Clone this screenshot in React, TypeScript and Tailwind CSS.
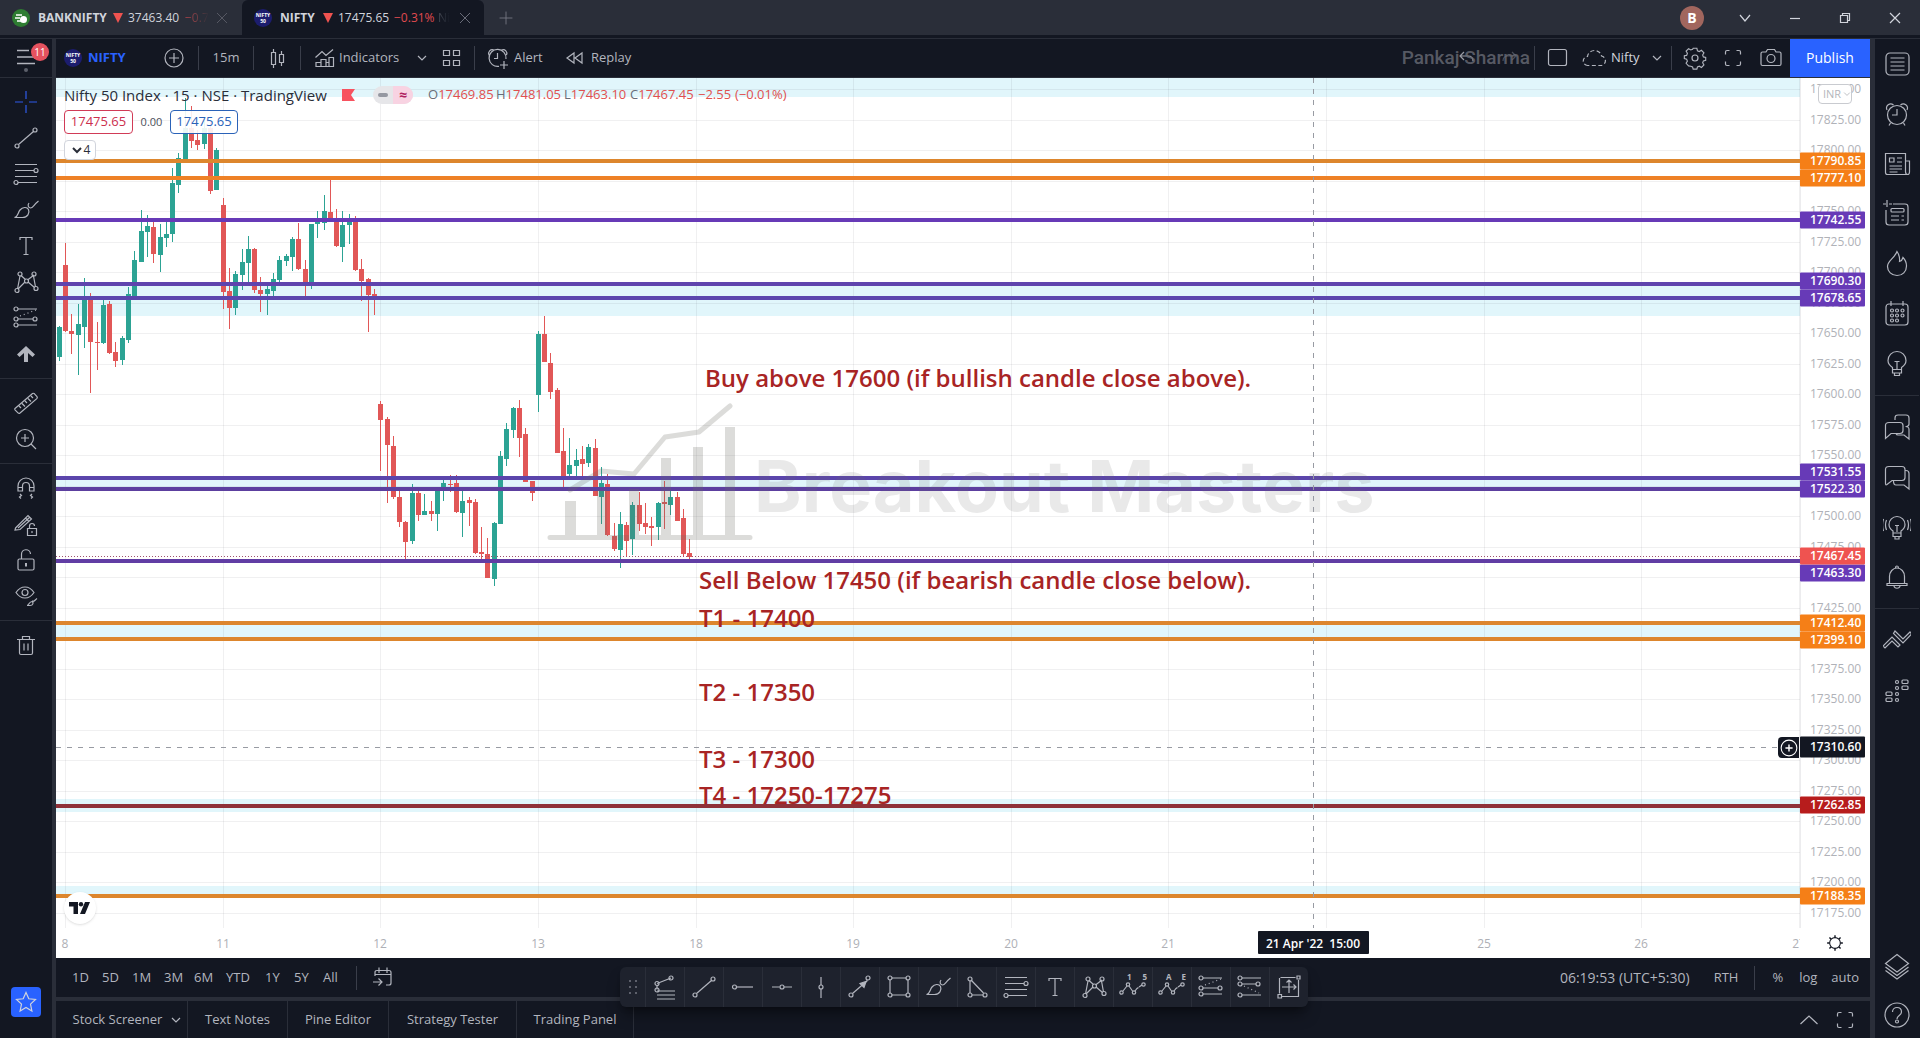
import type { ReactNode } from 'react'
import { clsx } from 'clsx'

// [high, bodyTop, bodyBottom, low, up] in chart pixels, 25 bars per session
type Candle = [number, number, number, number, 0 | 1]

const CANDLES: Candle[] = [
  // carry-over bar
  [248, 249, 279, 283, 1],
  // 8 Apr
  [165, 187, 253, 254, 0], [236, 253, 256, 276, 0], [226, 246, 257, 297, 1], [200, 221, 249, 270, 1], [215, 220, 264, 315, 0],
  [244, 264, 265, 292, 0], [222, 227, 265, 266, 1], [223, 226, 275, 276, 0], [264, 274, 283, 289, 0], [258, 260, 282, 287, 1],
  [209, 216, 262, 265, 1], [173, 182, 218, 219, 1], [132, 153, 184, 184, 1], [137, 148, 154, 179, 1], [144, 149, 176, 185, 0],
  [146, 159, 177, 194, 1], [144, 156, 160, 169, 1], [90, 105, 156, 164, 1], [75, 80, 107, 115, 1], [20, 50, 81, 81, 1],
  [28, 50, 63, 70, 0], [52, 62, 67, 72, 0], [40, 50, 66, 71, 1], [45, 50, 113, 116, 0], [70, 72, 112, 112, 1],
  // 11 Apr
  [120, 127, 214, 231, 0], [190, 213, 230, 251, 0], [193, 196, 230, 237, 1], [171, 184, 197, 212, 1], [158, 171, 185, 206, 1],
  [170, 171, 212, 215, 0], [199, 212, 216, 234, 0], [207, 211, 216, 237, 1], [195, 201, 213, 218, 1], [178, 182, 202, 205, 1],
  [176, 178, 183, 188, 1], [159, 161, 179, 193, 1], [145, 161, 191, 192, 0], [182, 191, 207, 218, 0], [146, 146, 206, 211, 1],
  [133, 143, 146, 160, 1], [117, 133, 145, 152, 1], [102, 134, 141, 143, 0], [131, 141, 168, 169, 0], [133, 147, 169, 184, 1],
  [136, 143, 147, 166, 1], [138, 142, 192, 193, 0], [181, 191, 203, 223, 0], [200, 201, 217, 254, 0], [211, 216, 218, 237, 0],
  // 12 Apr
  [323, 326, 342, 393, 0], [339, 341, 367, 425, 0], [358, 368, 419, 421, 0], [412, 419, 444, 449, 0], [443, 444, 464, 481, 0],
  [406, 415, 463, 466, 1], [412, 415, 437, 443, 0], [416, 433, 437, 437, 1], [423, 433, 436, 443, 0], [412, 412, 436, 453, 1],
  [402, 405, 410, 423, 1], [397, 406, 407, 414, 0], [397, 405, 434, 435, 0], [412, 423, 435, 459, 1], [419, 422, 425, 448, 0],
  [421, 424, 475, 476, 0], [449, 474, 476, 482, 0], [460, 476, 500, 500, 0], [444, 445, 501, 508, 1], [373, 378, 446, 446, 1],
  [345, 351, 381, 388, 1], [329, 330, 352, 360, 1], [322, 330, 360, 379, 0], [350, 356, 404, 404, 0], [403, 403, 415, 423, 0],
  // 13 Apr
  [253, 256, 317, 334, 1], [238, 256, 284, 284, 0], [275, 285, 314, 321, 0], [310, 312, 375, 375, 0], [350, 373, 398, 410, 0],
  [360, 387, 396, 398, 1], [371, 382, 388, 398, 1], [368, 381, 386, 398, 0], [366, 369, 385, 389, 1], [361, 370, 418, 418, 0],
  [389, 405, 419, 446, 1], [396, 406, 457, 458, 0], [445, 458, 471, 473, 0], [434, 446, 472, 490, 1], [444, 447, 463, 479, 0],
  [424, 427, 461, 477, 1], [414, 427, 446, 453, 0], [425, 445, 449, 456, 0], [439, 448, 450, 468, 0], [424, 425, 449, 462, 1],
  [403, 424, 426, 451, 0], [411, 419, 427, 437, 1], [414, 419, 443, 443, 0], [431, 440, 476, 478, 0], [461, 475, 479, 481, 0],
]

const BAR = 6.305
const priceY = (p: number) => Math.round(41.7 + (17825 - p) * 1.22)

const GRID_PRICES = Array.from({ length: 28 }, (_, i) => 17850 - i * 25)
const DAYS = ['8', '11', '12', '13', '18', '19', '20', '21', '', '25', '26', '27']
const dayX = (i: number) => Math.round(9 + i * BAR * 25)

const LEVELS = [
  { price: 17790.85, color: '#dd862d', tag: '#f57f17', tagY: 83 },
  { price: 17777.1, color: '#ee8126', tag: '#f57f17', tagY: 100 },
  { price: 17742.55, color: '#673ab7', tag: '#673ab7', tagY: 142 },
  { price: 17690.3, color: '#5f44ae', tag: '#673ab7', tagY: 203 },
  { price: 17678.65, color: '#5b46ad', tag: '#673ab7', tagY: 220 },
  { price: 17531.55, color: '#5b45ab', tag: '#673ab7', tagY: 394 },
  { price: 17522.3, color: '#5c3f9f', tag: '#673ab7', tagY: 411 },
  { price: 17463.3, color: '#613da4', tag: '#673ab7', tagY: 495 },
  { price: 17412.4, color: '#dd862d', tag: '#f57f17', tagY: 545 },
  { price: 17399.1, color: '#dd862d', tag: '#f57f17', tagY: 562 },
  { price: 17262.85, color: '#8f3138', tag: '#b71c1c', tagY: 727 },
  { price: 17188.35, color: '#dd862d', tag: '#f57f17', tagY: 818 },
]

const ZONES = [
  [0, 19],
  [206, 238],
  [400, 411],
  [545, 561],
  [721, 734],
  [808, 818],
]

const NOTES = [
  { x: 649, y: 309, text: 'Buy above 17600 (if bullish candle close above).' },
  { x: 643, y: 511, text: 'Sell Below 17450 (if bearish candle close below).' },
  { x: 643, y: 549, text: 'T1 - 17400' },
  { x: 643, y: 623, text: 'T2 - 17350' },
  { x: 643, y: 690, text: 'T3 - 17300' },
  { x: 643, y: 726, text: 'T4 - 17250-17275' },
]

function Icon({ children, size = 'size-7', className }: { children: ReactNode; size?: string; className?: string }) {
  return (
    <svg
      viewBox="0 0 28 28"
      className={clsx('shrink-0', size, className)}
      fill="none"
      stroke="currentColor"
      strokeWidth="1.2"
      aria-hidden="true"
    >
      {children}
    </svg>
  )
}

const Chevron = ({ size, className }: { size?: string; className?: string }) => (
  <Icon size={size} className={className}><path d="M10 12l4 4 4-4" /></Icon>
)

const ICONS = {
  cross: <path stroke="#2f5bea" d="M14 3v8M14 17v8M3 14h8M17 14h8" />,
  trend: <><path d="M6.500 20.500L21.500 7.500" /><circle cx="5" cy="22" r="2" /><circle cx="23" cy="6" r="2" /></>,
  fib: <><path d="M3 4.500h22M3 10.500h19M3 16.500h22M6 22.500h19" /><circle cx="24" cy="10.500" r="2" /><circle cx="4" cy="22.500" r="2" /></>,
  brush: <path d="M2.500 21.500c4-1 3-4.500 5.500-7.500 2.500-3 7-3.500 8.500-.5 1.500 3.500-1 8-6 8zM17 7c-1.500 2-1 4.500 1.500 5 2.500 0 3-3 8-7" />,
  text: <path d="M8 8V5.500h12V8M14 5.500v17M11.500 22.500h5" />,
  pattern: <><path d="M5.500 21L8 8M9 7.500l4.500 4M22 7l-6.500 5M21.500 8l2 11M6 21l7-7M22.500 19.500L16 14" /><circle cx="8" cy="6" r="2" /><circle cx="22" cy="6" r="2" /><circle cx="14.500" cy="13" r="2" /><circle cx="5" cy="22.500" r="2" /><circle cx="24" cy="20.500" r="2" /></>,
  forecast: <><path d="M6 5h19M6 15h15M6 21h19" /><path strokeDasharray="1 3" d="M8 12L24 6" /><circle cx="4" cy="5" r="2" /><circle cx="4" cy="15" r="2" /><circle cx="23" cy="15" r="2" /><circle cx="4" cy="21" r="2" /></>,
  arrowUp: <path fill="currentColor" stroke="none" d="M14 6l9 8.500-2.500 2.500-4.500-4v9h-4v-9l-4.500 4L5 14.500z" />,
  ruler: <path d="M3 19.500L20.500 4.500q1-.6 2 .3l2.500 2.800q.8 1-.2 2L8 24q-1 .8-2-.2l-3-3q-.6-.7 0-1.300zM7 17l2 2M10 14.500l3 3M13 12l2 2M16 9.500l3 3M19 7l2 2" />,
  zoom: <><circle cx="13" cy="13" r="8.500" /><path d="M19 19l5 5M13 9v8M9 13h8" /></>,
  magnet: <><path d="M6 17v-5a8 8 0 0116 0v5h-4.500v-5a3.500 3.500 0 00-7 0v5zM6 13.500h4.500M17.500 13.500H22" /><path d="M8 20l1.500 1.500L7.500 23 9 24.500M20 20l-1.500 1.500 2 1.500-1.500 1.500" /></>,
  pencilLock: <><path d="M3.500 18L16 5.500l3.500 3.500L8 19.500 3 20zM6 18L17.500 7.500M13.500 8l3.500 3.500" /><path d="M15.500 18.500h9v7h-9zM17.500 18.500v-2.500a2.500 2.500 0 015 0M20 21v2" /></>,
  lock: <><rect x="6" y="13" width="16" height="11" rx="1.500" /><path d="M9.500 13V8.500a4.500 4.500 0 019-.5" /><path strokeWidth="2" d="M14 17v3.500" /></>,
  eye: <><path d="M4 10.500C7 6 10 5 13 5s6 1 9 5.500c-3 4.500-6 5.500-9 5.500s-6-1-9-5.500z" /><circle cx="13" cy="10.500" r="3" /><path d="M15 23.500c2 0 2-4 5-4 2 1 1 4-2 4zM20.500 18.500c1 2 2 0 4.500-2" /></>,
  trash: <path d="M5 8.500h18M7.500 8.500v13.500q0 1.500 1.500 1.500h10q1.500 0 1.500-1.500V8.500M10.500 8V5.500h7V8M12 12.500v7M16 12.500v7" />,
  plus: <><circle cx="14" cy="14" r="9" /><path d="M14 9v10M9 14h10" /></>,
  candles: <path d="M8.500 8.500h4v12h-4zM10.500 5v3.500M10.500 20.500V24M16.500 10.500h4v8h-4zM18.500 7v3.500M18.500 18.500V22" />,
  indicators: <path d="M4.500 13.500L11 7.500l4 4L22 5.500M5 22.500v-4h5v4zM10 22.500v-7h5v7M15 22.500v-4h3M18 22.500v-9h4.500v9zM5 22.500h17.500" />,
  grid: <path d="M6.500 6.500h6v5h-6zM16.500 6.500h6v5h-6zM6.500 16.500h6v5h-6zM16.500 16.500h6v5h-6z" />,
  alert: <path d="M15 22.300A8.500 8.500 0 1122 15M13.500 9v5.500H10M5 11c-1.500-3 1.500-6.500 5-5M17.500 6c3.500-1.500 6.500 2 5 5M20 17v8M16 21h8" />,
  replay: <path d="M13 9v10l-7-5zM21 9v10l-7-5z" />,
  square: <rect x="4.500" y="5.500" width="18" height="16" rx="2" />,
  cloud: <path strokeDasharray="4 2.500" d="M7 21.500a4.500 4.500 0 01-.5-9c.5-4 4-6 7-6s6.500 2 7 5.500a4.800 4.800 0 01-.5 9.500z" />,
  gear: <><path d="M12 4.500h4l.6 2.600 2 .9 2.300-1.400 2.700 2.700-1.400 2.300.8 2 2.500.6v3l-2.500.6-.8 2 1.400 2.300-2.700 2.600-2.300-1.300-2 .8-.6 2.300h-4l-.6-2.300-2-.8L7.100 23l-2.700-2.700L5.800 18 5 16l-2.500-.6v-3L5 12l.8-2.200-1.400-2.300L7.100 5l2.300 1.300 2-.8z" transform="translate(1 0) scale(.93 .95)" /><circle cx="14" cy="14" r="3" /></>,
  full: <path d="M6.500 10.500V8q0-1.500 1.500-1.500h2.500M17.500 6.500H20q1.500 0 1.500 1.500v2.500M21.500 17.500V20q0 1.500-1.500 1.500h-2.500M10.500 21.500H8q-1.500 0-1.500-1.500v-2.500" />,
  camera: <><path d="M4 9.500q0-1.500 1.500-1.500H9l1.500-2.500h7L19 8h3.500Q24 8 24 9.500V20q0 1.500-1.500 1.500h-17Q4 21.500 4 20z" /><circle cx="14" cy="14.500" r="4" /></>,
  undo: <path stroke="#d1d4dc" d="M10 8l-4 4 4 4M6 12h8q5 0 5 5" />,
  list: <><rect x="3" y="3" width="23" height="22" rx="4" /><path d="M7.500 8h14M7.500 12h14M7.500 16h14M7.500 20h14" /></>,
  alarm: <><circle cx="14" cy="15" r="9.500" /><path d="M14 9v6H9M4 10C2 5.500 7 2 10.500 5M24 10C26 5.500 21 2 17.500 5M7.500 23L6 25.500M20.500 23L22 25.500" /></>,
  news: <path d="M2.500 3.500h20v18q0 3 2 3h-20q-2 0-2-2zM22.500 11h4v11q0 2.500-2 2.500M6.500 8h4.500v4H6.500zM14 8h5M14 12h5M6.500 16h12.500M6.500 19h12.500M6.500 22h8" />,
  notes: <><path d="M3 10v12q0 3 3 3h16q3 0 3-3V7q0-3-3-3H10M4 0v7M0 4h3M6 4h3" /><rect x="8" y="8.500" width="13" height="3.500" rx="1" /><path d="M8 16h8M18.500 16H21M8 20h8M18.500 20H21" /></>,
  fire: <path d="M14 25.500c-5.500 0-9.500-4-9.500-9 0-6 7-8 9.500-15 2 3 3 6 2.500 10 1.500-.5 3-2 3.500-4 2.500 2.500 3.500 5 3.500 8.500 0 5.500-4 9.500-9.500 9.500z" />,
  calendar: <><rect x="3" y="4" width="22" height="21" rx="3" /><path d="M8 1v5M20 1v5" /><g><circle cx="9" cy="10.500" r="1.500" /><circle cx="14" cy="10.500" r="1.500" /><circle cx="19.500" cy="10.500" r="1.500" /><circle cx="9" cy="15.500" r="1.500" /><circle cx="14" cy="15.500" r="1.500" /><circle cx="19.500" cy="15.500" r="1.500" /><circle cx="9" cy="20.500" r="1.500" /><circle cx="14" cy="20.500" r="1.500" /></g></>,
  bulb: <path d="M9.500 19.500v-2c-3-2-4.500-4-4.500-7a9 9 0 0118 0c0 3-1.500 5-4.500 7v2zM9.500 19.500v3.500h9v-3.500M11.500 23v2.500h5V23M11.500 11.500h5M14 11.500v7.500" />,
  chats: <path d="M12 7V5q0-3 3-3h8q3 0 3 3v6q0 2-2.500 2.500M6 9.500h11q3 0 3 3v5q0 3-3 3H8l-5.500 5v-13q0-3 3.500-3zM22.500 13.500q3.500 0 3.500 3v9.500l-5-4h-6q-1.500 0-2-1.500" />,
  chat: <path d="M6 3.500h13q3 0 3 3v8q0 3-3 3H9l-5 4q-1.500 1-1.500-1V6.500q0-3 3.500-3zM22 7.500h1q3 0 3 3V26l-5-4H13q-2.500 0-2.500-4" />,
  bulbWaves: <><path d="M10 20v-2c-3-2-4-4-4-6.500a8 8 0 0116 0c0 2.500-1 4.500-4 6.500v2zM10 20v3.500h8V20M12 23.500V26h4v-2.500M12 12.500h4M14 12.500V19" /><path d="M3.500 7q-2 5 0 10M.5 6q-2 6 0 12M24.500 7q2 5 0 10M27.500 6q2 6 0 12" /></>,
  bell: <path d="M6.500 20.500v-7a7.500 8.500 0 0115 0v7M4 20.500h20v2H4zM11 23c.5 3 5.500 3 6 0M12.500 5q0-2 1.500-2t1.500 2" />,
  ideas: <path d="M1 20l9-9 8 8-2 2-6-6-7 7zM13 5l8 8 7-7 1.500 2L21 17l-9.500-9.500z" transform="translate(-1 0)" />,
  dom: <><rect x="3" y="16" width="6" height="3.500" rx="1" /><rect x="3" y="22" width="6" height="3.500" rx="1" /><rect x="19" y="4" width="6" height="3.500" rx="1" /><rect x="19" y="10" width="6" height="3.500" rx="1" /><circle cx="14" cy="6" r="1.500" /><circle cx="14" cy="12" r="1.500" /><circle cx="14" cy="18" r="1.500" /><circle cx="14" cy="24" r="1.500" /></>,
  layers: <path d="M14 1.500l11.500 9L14 19 2.500 10.500zM2.500 14L14 22.500 25.500 14M2.500 17.500L14 26l11.500-8.500" />,
  help: <><circle cx="14" cy="14" r="12" /><path d="M9.500 11c0-6 9-6 9 0 0 3.500-4.500 3.500-4.500 7" /><circle cx="14" cy="20.500" r="1.500" /></>,
  star: <path d="M14 4.500l2.800 6.300 6.700.7-5 4.600 1.400 6.900-5.900-3.500L8.100 23l1.400-6.900-5-4.600 6.700-.7z" />,
  goTo: <path d="M6 12V8.500q0-2 2-2h12q2 0 2 2V19q0 2-2 2h-3M10 3.500V9M18 3.500V9M6 10.500h16M4 18h9M9.500 14.500L13 18l-3.500 3.500" />,
  up: <path d="M5.500 18L14 10l8.500 8" />,
  fibChannel: <><path d="M6 10.500L20 5M6 12.500v4M6 18h18M6 22h18M6 26h18" /><circle cx="6" cy="10.500" r="2" /><circle cx="20" cy="5" r="2" /><circle cx="6" cy="17" r="2" /></>,
  ray: <><path d="M7 14h17" /><circle cx="5.500" cy="14" r="2" /></>,
  hline: <><path d="M4 14h7.500M16 14h8" /><circle cx="14" cy="14" r="2" /></>,
  vline: <><path d="M14 4v8M14 16v9" /><circle cx="14" cy="14" r="2" /></>,
  arrow: <><path d="M6.500 20.500L21.500 7.500" /><path fill="currentColor" d="M20 8.500l-2 6-4-4z" /><circle cx="5" cy="22" r="2" /><circle cx="22" cy="5" r="2" /></>,
  rect: <><path d="M6.500 5h15M6.500 22h15M5 6.500v14M23 6.500v14" /><circle cx="5" cy="5" r="2" /><circle cx="23" cy="5" r="2" /><circle cx="5" cy="22" r="2" /><circle cx="23" cy="22" r="2" /></>,
  triangle: <><path d="M7 7.500V20M8.500 7.500L20.500 20M9 22h11" /><circle cx="7" cy="6" r="2" /><circle cx="7" cy="22" r="2" /><circle cx="22" cy="22" r="2" /></>,
  wave: <><path d="M4 18l4-5M10 13l3.500 5M16 18l2-2.500 1.500-1M20 14l3-2" /><circle cx="2.500" cy="19.500" r="1.700" /><circle cx="9" cy="11.500" r="1.700" /><circle cx="15" cy="19.500" r="1.700" /><circle cx="24.500" cy="11.500" r="1.700" /></>,
  short: <><path d="M6 5h19M6 11h14M6 22h19" /><path strokeDasharray="1 3" d="M8 13L23 20" /><circle cx="4" cy="5" r="2" /><circle cx="4" cy="11" r="2" /><circle cx="22" cy="11" r="2" /><circle cx="4" cy="22" r="2" /></>,
  range: <path d="M5.500 4.500h15M4.500 5v15.500M23.500 7v16.500H7M14 20V7M11.500 9.500L14 7l2.500 2.500M7 14h14M18.500 11.500L21 14l-2.500 2.500M22 3h3v3h-3zM3 21.500h3.500V25H3z" />,
}

type IconName = keyof typeof ICONS

function IconButton({ icon, label, className }: { icon: IconName; label: string; className?: string }) {
  return (
    <button aria-label={label} className={clsx('flex shrink-0 items-center justify-center text-[#b2b5be]', className)}>
      <Icon>{ICONS[icon]}</Icon>
    </button>
  )
}

const Sep = ({ className }: { className?: string }) => <div className={clsx('h-6 w-px shrink-0 bg-[#3a3e4a]', className)} />

function NiftyLogo() {
  return (
    <span className="flex size-[18px] shrink-0 flex-col items-center justify-center rounded-full bg-[#1c1d6e] text-[5px] leading-[6px] font-bold text-white">
      <span>NIFTY</span>
      <span>50</span>
    </span>
  )
}

function TabStrip() {
  return (
    <div className="flex h-[35px] shrink-0 items-stretch bg-[#2a2e39] text-xs text-[#d1d4dc]">
      <div className="flex w-[242px] items-center pl-3">
        <button className="flex w-[200px] items-center overflow-hidden whitespace-nowrap">
          <svg viewBox="0 0 18 18" className="size-[18px] shrink-0" aria-hidden="true">
            <circle cx="9" cy="9" r="9" fill="#2e7d32" />
            <path d="M4 6h6M3 9h5M5 12h4" stroke="#fff" strokeWidth="1.500" />
            <circle cx="11.500" cy="10.500" r="3.500" fill="#fff" />
          </svg>
          <b className="ml-2 w-[73px] text-left">BANKNIFTY</b>
          <Triangle />
          <span className="w-[57px] text-left">37463.40</span>
          <span className="bg-linear-to-r from-[#b8434a] to-[#2a2e39] bg-clip-text text-transparent">−0.7</span>
        </button>
        <button aria-label="Close BANKNIFTY" className="text-[#5d606b]">
          <Icon size="size-5"><path d="M7 7l14 14M21 7L7 21" /></Icon>
        </button>
      </div>
      <div className="flex w-[242px] items-center rounded-t-md bg-[#131722] pl-3">
        <button className="flex w-[201px] items-center overflow-hidden whitespace-nowrap">
          <NiftyLogo />
          <b className="ml-2 w-[41px] text-left">NIFTY</b>
          <Triangle />
          <span className="w-[56px] text-left">17475.65</span>
          <span className="w-[44px] text-left text-[#e04a4f]">−0.31%</span>
          <span className="bg-linear-to-r from-[#4a4e59] to-[#131722] bg-clip-text text-transparent">Ni</span>
        </button>
        <button aria-label="Close NIFTY" className="text-[#787b86]">
          <Icon size="size-5"><path d="M7 7l14 14M21 7L7 21" /></Icon>
        </button>
      </div>
      <button aria-label="New tab" className="ml-1 flex w-9 items-center justify-center text-[#787b86]">
        <Icon size="size-5"><path d="M14 5v18M5 14h18" /></Icon>
      </button>
      <div className="ml-auto flex items-center">
        <button className="mr-4 flex size-6 items-center justify-center rounded-full bg-[#a1665e] text-sm font-bold text-white">B</button>
        <button aria-label="More" className="flex w-[50px] justify-center"><Icon><path d="M9 11l5 6 5-6" /></Icon></button>
        <button aria-label="Minimize" className="flex w-[50px] justify-center"><Icon><path d="M9 14.500h10" /></Icon></button>
        <button aria-label="Restore" className="flex w-[50px] justify-center"><Icon><path d="M9.500 11.500h7v7h-7zM11.500 11.500v-2h7v7h-2" /></Icon></button>
        <button aria-label="Close window" className="flex w-[50px] justify-center"><Icon><path d="M9 9l10 10M19 9L9 19" /></Icon></button>
      </div>
    </div>
  )
}

const Triangle = () => (
  <svg viewBox="0 0 10 10" className="mr-[5px] ml-[2px] size-[10px] shrink-0" aria-hidden="true">
    <path d="M0 0h10L5 10z" fill="#ef5350" />
  </svg>
)

const TOOL_GROUPS: [IconName, string][][] = [
  [
    ['cross', 'Cross'], ['trend', 'Trend line'], ['fib', 'Fib retracement'], ['brush', 'Brush'],
    ['text', 'Text'], ['pattern', 'Patterns'], ['forecast', 'Long position'], ['arrowUp', 'Arrow mark up'],
  ],
  [['ruler', 'Measure'], ['zoom', 'Zoom in']],
  [['magnet', 'Magnet mode'], ['pencilLock', 'Stay in drawing mode'], ['lock', 'Lock drawings'], ['eye', 'Hide drawings']],
  [['trash', 'Remove drawings']],
]

function DrawingBar() {
  return (
    <nav className="flex w-14 shrink-0 flex-col border-r-4 border-[#2a2e39]">
      <button aria-label="Menu" className="relative flex h-[39px] items-center justify-center border-b border-[#2a2e39] text-[#b2b5be]">
        <Icon><path strokeWidth="1.500" d="M5 6.500h12M5 13h18M5 19.500h18" /></Icon>
        <span className="absolute top-1 left-[31px] flex size-[18px] items-center justify-center rounded-full bg-[#e5525f] text-[10px] text-white">11</span>
        <span className="absolute bottom-[5px] size-1 rounded-full bg-[#5d606b]" />
      </button>
      {TOOL_GROUPS.map((group, i) => (
        <div key={i} className={clsx('flex flex-col py-[6px]', i < TOOL_GROUPS.length - 1 && 'border-b border-[#2a2e39]')}>
          {group.map(([icon, label]) => (
            <IconButton key={label} icon={icon} label={label} className="h-9" />
          ))}
        </div>
      ))}
      <button aria-label="Show favorite tools" className="mt-auto mb-[21px] ml-[11px] flex size-[30px] items-center justify-center rounded-sm bg-[#2962ff] text-[#d1d4dc]">
        <Icon>{ICONS.star}</Icon>
      </button>
    </nav>
  )
}

function Header() {
  return (
    <header className="flex h-[39px] shrink-0 items-center border-b border-[#2a2e39] text-[13px] whitespace-nowrap text-[#b2b5be]">
      <button className="flex w-[98px] items-center gap-[6px] pl-2 font-bold text-[#2962ff]">
        <NiftyLogo />
        NIFTY
      </button>
      <IconButton icon="plus" label="Compare" className="w-10" />
      <Sep className="ml-1" />
      <button className="w-[54px]">15m</button>
      <Sep />
      <IconButton icon="candles" label="Candles" className="w-[46px]" />
      <Sep />
      <button className="flex w-[105px] items-center pl-[10px]"><Icon>{ICONS.indicators}</Icon>Indicators</button>
      <button aria-label="Favorite indicators" className="flex w-8 justify-center"><Chevron /></button>
      <button aria-label="Templates" className="flex w-[25px] justify-center"><Icon>{ICONS.grid}</Icon></button>
      <Sep className="ml-[11px]" />
      <button className="flex w-[76px] items-center gap-[2px] pl-[9px]"><Icon>{ICONS.alert}</Icon>Alert</button>
      <button className="flex items-center gap-[2px] pl-[10px]"><Icon>{ICONS.replay}</Icon>Replay</button>

      <div className="relative ml-auto flex items-center pr-1">
        <IconButton icon="undo" label="Undo" className="w-9 opacity-70" />
        <button aria-label="Redo" className="flex w-11 justify-center text-[#4a4e59]"><Icon><path d="M18 8l4 4-4 4M22 12h-8q-5 0-5 5" /></Icon></button>
        <span className="absolute right-1 font-['Roboto',sans-serif] text-[19px] font-medium text-[#696c76]/80">Pankaj Sharma</span>
      </div>
      <Sep />
      <IconButton icon="square" label="Layout" className="w-[46px]" />
      <button className="flex w-[62px] items-center gap-[2px] text-[#d1d4dc]"><Icon className="text-[#b2b5be]">{ICONS.cloud}</Icon>Nifty</button>
      <button aria-label="Manage layouts" className="flex w-7 justify-center"><Chevron /></button>
      <Sep className="mr-1" />
      <IconButton icon="gear" label="Settings" className="w-[38px]" />
      <IconButton icon="full" label="Fullscreen" className="w-[38px]" />
      <IconButton icon="camera" label="Snapshot" className="w-[38px]" />
      <button className="h-full w-20 bg-[#2962ff] text-sm text-white">Publish</button>
    </header>
  )
}

function Plot() {
  return (
    <svg className="block h-full w-full" role="img" aria-label="Nifty 50 Index, 15 minute candles">
      {ZONES.map(([top, bottom]) => (
        <rect key={top} x="0" y={top} width="100%" height={bottom - top} fill="#e1f6fb" />
      ))}
      <g fill="#2a2e39" fillOpacity="0.07">
        {GRID_PRICES.map(p => <rect key={p} x="0" y={priceY(p)} width="100%" height="1" />)}
        {DAYS.map((d, i) => d && <rect key={d} x={dayX(i)} y="0" width="1" height="100%" />)}
        <rect x="1270" y="0" width="1" height="100%" />
      </g>

      {CANDLES.map(([high, top, bottom, low, up], i) => {
        const x = Math.round(9 + (i - 1) * BAR)
        return (
          <g key={i} fill={up ? '#2ca394' : '#e15757'}>
            <rect x={x} y={high} width="1" height={low - high} />
            <rect x={x - 2} y={top} width="5" height={bottom - top} />
          </g>
        )
      })}

      <line x1="0" x2="100%" y1="478.500" y2="478.500" stroke="#a0526f" strokeDasharray="1 2" />
      {LEVELS.map(l => (
        <rect key={l.price} x="0" y={priceY(l.price) - 2} width="100%" height="4" fill={l.color} />
      ))}

      {/* channel watermark */}
      <g fill="#6b6b63" stroke="#6b6b63" opacity="0.23">
        <path
          fill="none"
          strokeWidth="5"
          strokeLinecap="round"
          strokeLinejoin="round"
          d="M494 459.500H694M514 412L545 393 578 396 609 359 643 354 674 328"
        />
        <path stroke="none" d="M509 423h11v34h-11zM541 412h10v45h-10zM573 411h10v46h-10zM605 380h10v77h-10zM637 369h10v88h-10zM669 349h10v108h-10z" />
      </g>
      <text x="698" y="434" fill="#6b6b6b" fillOpacity="0.15" className="font-['Inter',sans-serif] text-[72px] font-bold">
        Breakout Masters
      </text>

      <g fill="#a82424" className="text-2xl font-semibold">
        {NOTES.map(n => <text key={n.text} x={n.x} y={n.y}>{n.text}</text>)}
      </g>

      {/* crosshair */}
      <g stroke="#989ba3" strokeDasharray="5 6">
        <line x1="0" x2="100%" y1="669.500" y2="669.500" />
        <line x1="1257.500" x2="1257.500" y1="0" y2="100%" />
      </g>
    </svg>
  )
}

function PriceTag({ y, height, price, fill }: { y: number; height: number; price: number; fill: string }) {
  return (
    <g>
      <rect x="-1" y={y - height / 2} width="65" height={height} rx="1" fill={fill} />
      <text x="9" y={y + 4} fill="#fff" className="font-semibold">{price.toFixed(2)}</text>
    </g>
  )
}

function PriceAxis() {
  return (
    <div className="relative w-[70px] shrink-0 border-l border-[#ececee]">
      <svg className="block h-full w-full overflow-visible text-xs">
        <g fill="#b0b2b8">
          {GRID_PRICES.map(p => <text key={p} x="9" y={priceY(p) + 4}>{p.toFixed(2)}</text>)}
        </g>
        {LEVELS.map(l => (
          <PriceTag key={l.price} y={l.tagY} height={17} price={l.price} fill={l.tag} />
        ))}
        <PriceTag y={478} height={17} price={17467.45} fill="#ef5350" />
        <PriceTag y={669} height={21} price={17310.6} fill="#131722" />
      </svg>
      <button className="absolute top-[6px] left-[17px] flex h-5 w-[34px] items-center rounded-sm border border-[#c9cbd0] bg-white pl-1 text-[11px] text-[#b4b6bb]">
        INR
        <Chevron size="size-5" className="-ml-1" />
      </button>
      <button aria-label="Add alert at 17310.60" className="absolute top-[659px] -left-[23px] flex size-[21px] items-center justify-center rounded-l-sm bg-[#131722] text-white">
        <Icon size="size-5"><circle cx="14" cy="14" r="11" strokeWidth="1.500" /><path strokeWidth="2" d="M14 9v10M9 14h10" /></Icon>
      </button>
    </div>
  )
}

const OHLC = [
  ['O', '17469.85', 'w-[68px]'],
  ['H', '17481.05', 'w-[68px]'],
  ['L', '17463.10', 'w-[66px]'],
  ['C', '17467.45', 'w-[68px]'],
]

function Legend() {
  return (
    <div className="absolute top-[7px] left-2 whitespace-nowrap">
      <div className="flex h-5 items-center">
        <span className="w-[278px] text-[15px] text-[#2a2e39]">Nifty 50 Index · 15 · NSE · TradingView</span>
        <svg viewBox="0 0 13 12" className="h-3 w-[13px]" aria-hidden="true"><path fill="#f7525f" d="M0 0h13L9 6l4 6H0z" /></svg>
        <span className="ml-[18px] flex h-[18px] w-10 overflow-hidden rounded-full bg-[#e6e6e9]">
          <span className="flex w-5 items-center justify-center"><i className="h-1 w-[10px] rounded-full bg-[#9598a1]" /></span>
          <span className="flex w-5 items-center justify-center bg-[#f8d3e2] text-sm font-bold text-[#b0225f]">≈</span>
        </span>
        <span className="ml-[15px] flex text-[13px] text-[#e0504f]">
          {OHLC.map(([k, v, w]) => (
            <span key={k} className={w}><span className="text-[#6a6d78]">{k}</span>{v}</span>
          ))}
          <span className="w-[37px]">−2.55</span>
          <span>(−0.01%)</span>
        </span>
      </div>
      <div className="mt-[5px] flex h-6 items-center">
        <button className="h-6 w-[69px] rounded border border-[#d13b57] bg-white/90 text-[13px] text-[#cc2f4d]">17475.65</button>
        <span className="w-[37px] text-center text-[11px] text-[#4a4e59]">0.00</span>
        <button className="h-6 w-[68px] rounded border border-[#2a62b8] bg-white/90 text-[13px] text-[#2a62b8]">17475.65</button>
      </div>
      <button className="mt-[6px] flex h-5 w-8 items-center justify-center rounded-sm border border-[#d1d4dc] bg-white text-xs text-[#2a2e39]">
        <Chevron className="-mx-[7px] stroke-2" />4
      </button>
    </div>
  )
}

function TimeAxis() {
  return (
    <div className="flex h-[30px] shrink-0">
      <svg className="block h-full flex-1 overflow-hidden text-xs">
        <g fill="#aeb0b6" textAnchor="middle">
          {DAYS.map((d, i) => d && <text key={d} x={dayX(i)} y="20">{d}</text>)}
        </g>
        <rect x="1202" y="3" width="111" height="23" rx="1" fill="#131722" />
        <text x="1257" y="20" fill="#fff" textAnchor="middle" className="font-semibold whitespace-pre">{"21 Apr '22  15:00"}</text>
      </svg>
      <button aria-label="Axis settings" className="flex w-[70px] items-center justify-center text-[#131722]">
        <Icon size="size-5">
          <circle cx="14" cy="14" r="7.500" strokeWidth="1.500" />
          <path strokeWidth="2" d="M14 3v3.500M14 21.500V25M3 14h3.500M21.500 14H25M6.200 6.200l2.500 2.500M19.300 19.300l2.500 2.500M6.200 21.800l2.500-2.500M19.300 8.700l2.500-2.500" />
        </Icon>
      </button>
    </div>
  )
}

const RANGES = [
  ['1D', 'w-[30px]'], ['5D', 'w-[30px]'], ['1M', 'w-8'], ['3M', 'w-[30px]'], ['6M', 'w-8'],
  ['YTD', 'w-[39px]'], ['1Y', 'w-[29px]'], ['5Y', 'w-[29px]'], ['All', 'w-[33px]'],
]

function RangeBar() {
  return (
    <div className="flex h-[39px] shrink-0 items-center pl-4 text-[13px] whitespace-nowrap text-[#b2b5be]">
      {RANGES.map(([r, w]) => <button key={r} className={clsx('text-left', w)}>{r}</button>)}
      <Sep />
      <IconButton icon="goTo" label="Go to" className="ml-3" />
      <div className="ml-auto flex items-center pr-[11px]">
        <button className="text-sm">06:19:53 (UTC+5:30)</button>
        <button className="ml-6">RTH</button>
        <Sep className="ml-4" />
        <button className="ml-[17px]">%</button>
        <button className="ml-4">log</button>
        <button className="ml-[14px]">auto</button>
      </div>
    </div>
  )
}

const PANELS = [
  ['Stock Screener', 'w-[132px]'],
  ['Text Notes', 'w-[100px]'],
  ['Pine Editor', 'w-[101px]'],
  ['Strategy Tester', 'w-[128px]'],
  ['Trading Panel', 'w-[117px]'],
]

function PanelTabs() {
  return (
    <div className="flex h-[37px] shrink-0 items-center text-[13px] whitespace-nowrap text-[#b2b5be]">
      {PANELS.map(([name, w], i) => (
        <button key={name} className={clsx('flex h-full items-center justify-center border-r border-[#2a2e39]', w)}>
          {name}
          {i === 0 && <Chevron className="-mr-5" />}
        </button>
      ))}
      <div className="ml-auto flex pr-[7px]">
        <IconButton icon="up" label="Open panel" className="w-9" />
        <IconButton icon="full" label="Maximize panel" className="w-9" />
      </div>
    </div>
  )
}

const FAVORITES: [IconName, string][] = [
  ['fibChannel', 'Trend-based fib'], ['trend', 'Trend line'], ['ray', 'Horizontal ray'], ['hline', 'Horizontal line'],
  ['vline', 'Vertical line'], ['arrow', 'Arrow'], ['rect', 'Rectangle'], ['brush', 'Brush'], ['triangle', 'Triangle'],
  ['fib', 'Fib retracement'], ['text', 'Text'], ['pattern', 'XABCD pattern'], ['wave', '1 5'], ['wave', 'A E'],
  ['forecast', 'Long position'], ['short', 'Short position'], ['range', 'Date and price range'],
]

function FavoritesBar() {
  return (
    <div className="absolute bottom-[31px] left-[564px] flex h-10 rounded-md bg-[#1e222d] shadow-lg shadow-black/40">
      <div className="grid w-[25px] grid-cols-[2px_2px] content-center justify-center gap-1">
        {Array.from({ length: 6 }, (_, i) => <i key={i} className="size-[2px] bg-[#5d606b]" />)}
      </div>
      {FAVORITES.map(([icon, label]) => (
        <button key={label} aria-label={label} className="relative flex w-[39px] items-center justify-center border-l border-[#2a2e39] text-[#b2b5be]">
          <Icon>{ICONS[icon]}</Icon>
          {icon === 'wave' && (
            <span className="absolute top-1 left-[13px] flex w-[20px] justify-between text-[8px] leading-3 font-bold">
              {label.split(' ').map(c => <span key={c}>{c}</span>)}
            </span>
          )}
        </button>
      ))}
    </div>
  )
}

const SIDE_GROUPS: [IconName, string][][] = [
  [
    ['list', 'Watchlist'], ['alarm', 'Alerts'], ['news', 'News'], ['notes', 'Data window'],
    ['fire', 'Hotlists'], ['calendar', 'Calendar'], ['bulb', 'My ideas'],
  ],
  [['chats', 'Public chats'], ['chat', 'Private chats'], ['bulbWaves', 'Ideas stream'], ['bell', 'Notifications']],
  [['ideas', 'Order panel'], ['dom', 'DOM']],
]

function SideBar() {
  return (
    <aside className="flex w-[50px] shrink-0 flex-col border-l-[5px] border-[#2a2e39] pr-px">
      {SIDE_GROUPS.map((group, i) => (
        <div key={i} className={clsx('flex flex-col', i > 0 && 'pt-[6px]', i < 2 && 'border-b border-[#2a2e39] pb-[6px]')}>
          {group.map(([icon, label]) => <IconButton key={label} icon={icon} label={label} className="h-[50px]" />)}
        </div>
      ))}
      <div className="mt-auto flex flex-col">
        <IconButton icon="layers" label="Object tree" className="h-[50px]" />
        <IconButton icon="help" label="Help" className="h-[46px]" />
      </div>
    </aside>
  )
}

export default function App() {
  return (
    <div className="flex h-screen flex-col overflow-hidden bg-[#131722] font-['Open_Sans',sans-serif]">
      <TabStrip />
      <div className="mt-[3px] flex min-h-0 flex-1 border-t border-[#2a2e39]">
        <DrawingBar />
        <div className="relative flex min-w-0 flex-1 flex-col">
          <Header />
          <main className="flex min-h-0 flex-1 flex-col bg-white">
            <div className="flex min-h-0 flex-1">
              <div className="relative min-w-0 flex-1">
                <Plot />
                <Legend />
                <div className="absolute bottom-1 left-2 flex size-8 items-center justify-center rounded-full bg-white shadow">
                  <svg viewBox="0 0 22 12" className="h-3 w-[22px]" aria-label="TradingView" fill="#131722">
                    <path d="M0 0h9v12H4.500V4.500H0zM16 0h5l-5 12h-5z" />
                    <circle cx="12" cy="2.300" r="2.200" />
                  </svg>
                </div>
              </div>
              <PriceAxis />
            </div>
            <TimeAxis />
          </main>
          <RangeBar />
          <div className="h-1 shrink-0 bg-[#2a2e39]" />
          <PanelTabs />
          <FavoritesBar />
        </div>
        <SideBar />
      </div>
    </div>
  )
}
